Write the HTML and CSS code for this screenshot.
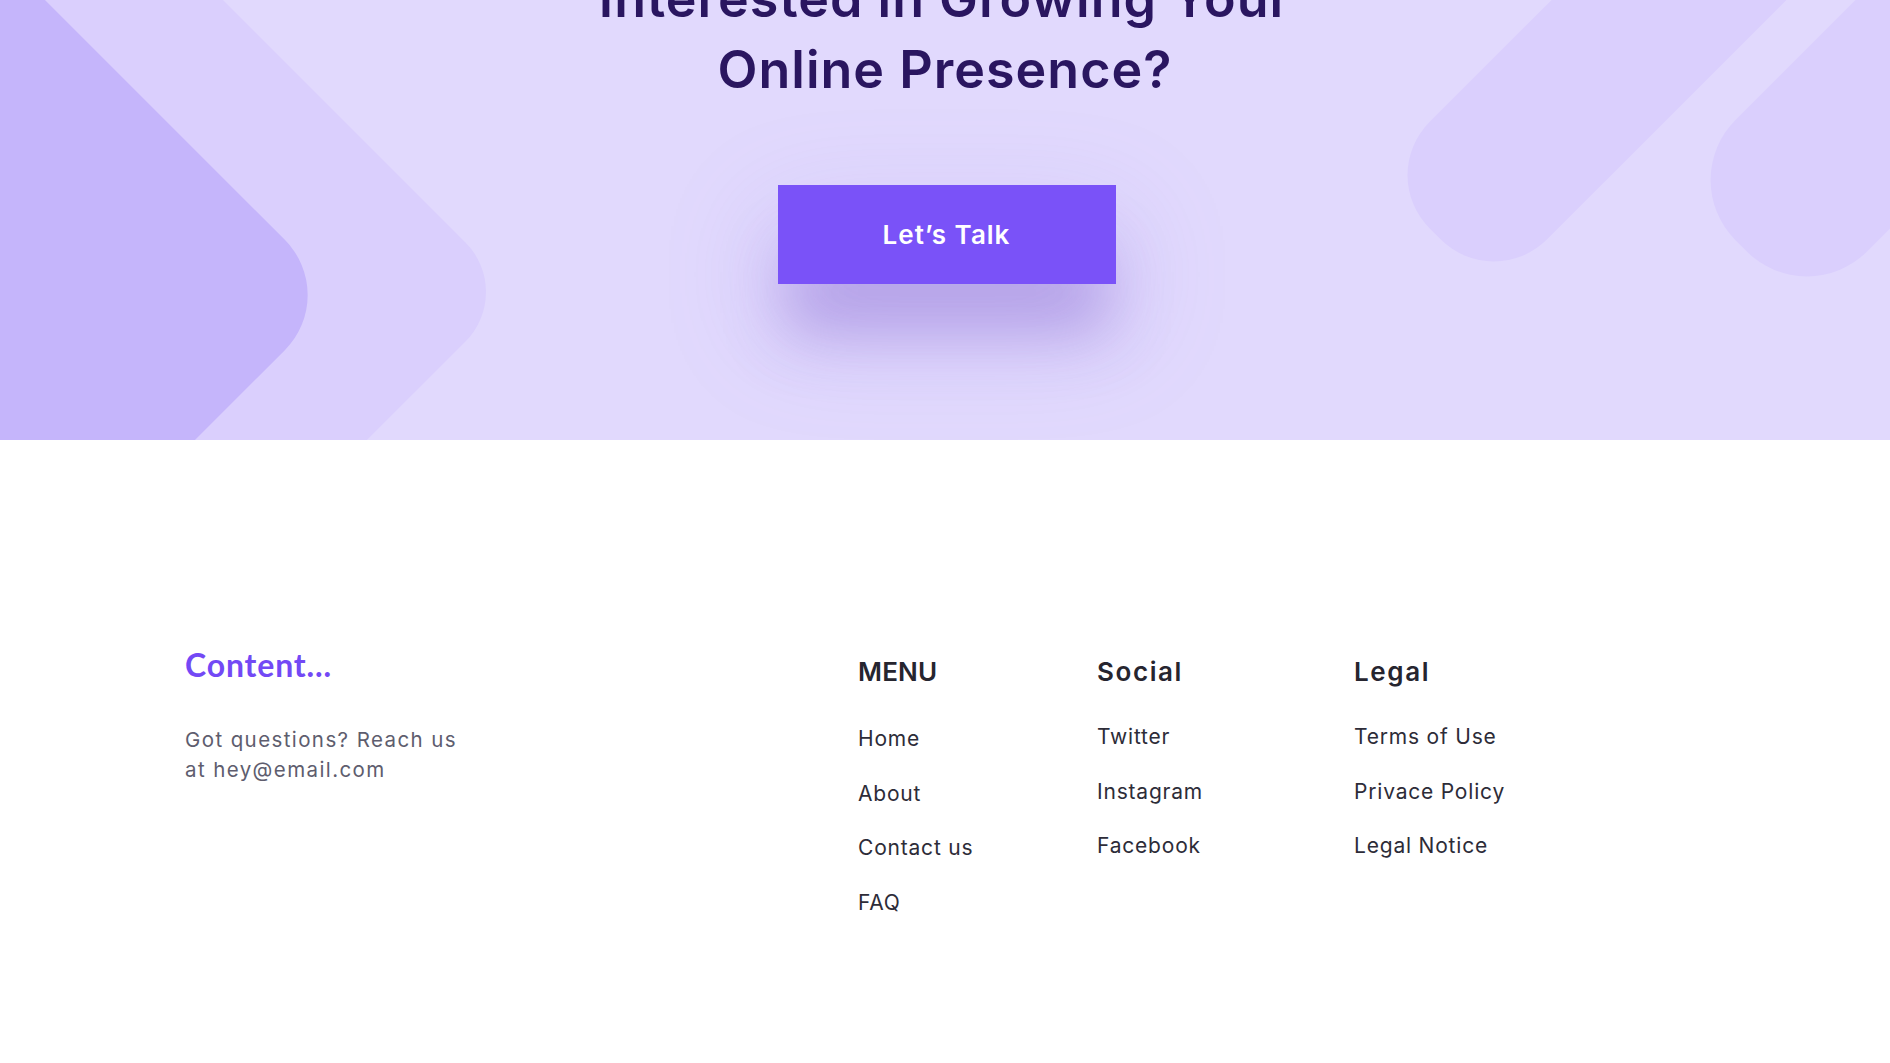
FILE: index.html
```html
<!DOCTYPE html>
<html lang="en">
<head>
<meta charset="utf-8">
<title>Interested in Growing Your Online Presence?</title>
<link rel="stylesheet" href="styles.css">
</head>
<body>
<section class="cta">
  <div class="shape shape-light"></div>
  <div class="shape shape-dark"></div>
  <div class="bar bar-one"></div>
  <div class="bar bar-two"></div>
  <div class="cta-inner">
    <h1 class="cta-title">Interested in Growing Your<br>Online Presence?</h1>
    <a class="cta-button" href="#">Let’s Talk</a>
  </div>
</section>
<footer class="footer">
  <div class="footer-grid">
    <div class="brand">
      <div class="brand-name">Content...</div>
      <p class="brand-text">Got questions? Reach us<br>at hey@email.com</p>
    </div>
    <div class="col">
      <h3 class="col-title col-title-caps">MENU</h3>
      <ul class="col-list">
        <li>Home</li>
        <li>About</li>
        <li>Contact us</li>
        <li>FAQ</li>
      </ul>
    </div>
    <div class="col">
      <h3 class="col-title">Social</h3>
      <ul class="col-list col-list-up">
        <li>Twitter</li>
        <li>Instagram</li>
        <li>Facebook</li>
      </ul>
    </div>
    <div class="col">
      <h3 class="col-title">Legal</h3>
      <ul class="col-list col-list-up">
        <li>Terms of Use</li>
        <li>Privace Policy</li>
        <li>Legal Notice</li>
      </ul>
    </div>
  </div>
</footer>
</body>
</html>
```

FILE: styles.css
```css
html, body {
  margin: 0;
  padding: 0;
  background: #ffffff;
}
body {
  width: 1890px;
  height: 1063px;
  overflow: hidden;
  font-family: Inter, "Noto Sans", sans-serif;
}

.cta {
  position: relative;
  height: 440px;
  background: #e1d9fd;
  overflow: hidden;
}

.shape {
  position: absolute;
  width: 700px;
  height: 700px;
  top: -58px;
  transform: rotate(45deg);
}
.shape-light {
  left: -330px;
  background: #dacffd;
  border-radius: 70px;
}
.shape-dark {
  left: -505px;
  top: -55px;
  background: #c5b5fb;
  border-radius: 78px;
}

.bar {
  position: absolute;
  width: 800px;
  height: 166px;
  background: #dacffd;
  border-radius: 75px;
  transform: rotate(-45deg);
}
.bar-one {
  left: 1318px;
  top: -132px;
}
.bar-two {
  left: 1624px;
  top: -130px;
  height: 186px;
  border-radius: 85px;
}

.cta-inner {
  position: relative;
  display: flex;
  flex-direction: column;
  align-items: center;
}

.cta-title {
  margin: -37px 0 0;
  font-size: 52px;
  line-height: 71px;
  font-weight: 600;
  color: #2a1660;
  text-align: center;
  letter-spacing: 1px;
}

.cta-button {
  margin-top: 80px;
  margin-left: 3px;
  width: 338px;
  height: 99px;
  display: flex;
  align-items: center;
  justify-content: center;
  background: #7a52f8;
  color: #ffffff;
  text-decoration: none;
  font-size: 26px;
  font-weight: 600;
  letter-spacing: 1px;
  box-shadow: 0 58px 60px -8px rgba(115, 80, 200, 0.34),
              0 40px 110px 10px rgba(150, 120, 230, 0.18);
}

.footer {
  padding: 207px 0 0 185px;
}
.footer-grid {
  display: grid;
  grid-template-columns: 673px 239px 257px 350px;
  align-items: start;
}

.brand-name {
  font-family: Lato, "Noto Sans", sans-serif;
  font-weight: 700;
  font-size: 32px;
  line-height: 36px;
  letter-spacing: 0.85px;
  color: #7349f5;
}
.brand-text {
  margin: 42px 0 0;
  font-size: 20.5px;
  line-height: 30px;
  color: #5e5d6e;
  letter-spacing: 1.4px;
}

.col {
  margin-top: 9px;
}
.col-title {
  margin: 0;
  font-size: 26px;
  line-height: 32px;
  font-weight: 600;
  color: #26252f;
  letter-spacing: 1.6px;
}
.col-title-caps {
  letter-spacing: 0.2px;
}
.col-list {
  list-style: none;
  margin: 37px 0 0;
  padding: 0;
  display: flex;
  flex-direction: column;
  gap: 26.6px;
}
.col-list-up {
  margin-top: 35px;
}
.col-list li {
  font-size: 21px;
  line-height: 28px;
  color: #2d2c38;
  letter-spacing: 0.8px;
}
```
